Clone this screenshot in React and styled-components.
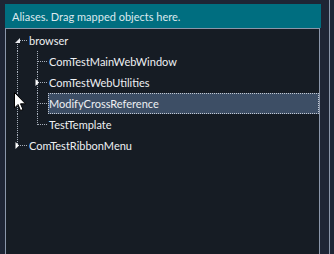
import React from 'react'
import styled, { createGlobalStyle, css } from 'styled-components'

const GlobalStyle = createGlobalStyle`
  html, body {
    margin: 0;
    padding: 0;
    background: #1e2535;
    font-family: Lato, "Noto Sans", sans-serif;
  }
`;

const Screen = styled.div`
    position: relative;
    width: 334px;
    height: 254px;
    display: flex;
    overflow: hidden;
`;

const Main = styled.div`
    width: 316px;
    margin: 4px 0 0 5px;
    display: flex;
    flex-direction: column;
`;

const Edge = styled.div`
    width: 1px;
    margin-left: 8px;
    background: #8a96aa;
`;

const Header = styled.div`
    height: 24px;
    background: #006e80;
    color: #dce9ee;
    font-size: 11px;
    display: flex;
    align-items: center;
    padding-left: 7px;
`;

const Panel = styled.div`
    flex: 1;
    width: 315px;
    box-sizing: border-box;
    background: #161c24;
    border-left: 1px solid #8a96aa;
    border-top: 1px solid #8a96aa;
    border-right: 1px solid #8a96aa;
    padding: 1px 0 0 1px;
`;

const Row = styled.div`
    height: 21px;
    display: flex;
    align-items: stretch;
`;

const Branch = styled.div`
    position: relative;
    width: 20px;
    flex: none;

    ${p => (p.$kind === 'pipe' || p.$kind === 'tee') && css`
        &::before {
            content: '';
            position: absolute;
            left: 10px;
            top: 0;
            bottom: 0;
            border-left: 1px dotted #a7afbb;
        }
    `}
    ${p => p.$kind === 'elbow' && css`
        &::before {
            content: '';
            position: absolute;
            left: 10px;
            top: 0;
            height: 11px;
            border-left: 1px dotted #a7afbb;
        }
    `}
    ${p => p.$kind === 'first' && css`
        &::before {
            content: '';
            position: absolute;
            left: 10px;
            top: 11px;
            bottom: 0;
            border-left: 1px dotted #a7afbb;
        }
    `}
    ${p => p.$kind !== 'pipe' && css`
        &::after {
            content: '';
            position: absolute;
            left: 11px;
            right: 0;
            top: 10px;
            border-top: 1px dotted #a7afbb;
        }
    `}
`;

const Toggle = styled.svg`
    position: absolute;
    left: 7px;
    top: 7px;
    z-index: 1;
`;

const Label = styled.div`
    flex: 1;
    margin-left: 1px;
    display: flex;
    align-items: center;
    font-size: 11px;
    color: #eef0f3;
    white-space: nowrap;
    box-sizing: border-box;
    border: 1px solid transparent;
    ${p => p.$selected && css`
        background: #3d4e65;
        border: 1px dotted #c4cad3;
    `}
`;

const Cursor = styled.svg`
    position: absolute;
    left: 14px;
    top: 92px;
`;

function Arrow({ open }) {
    return open ? (
        <Toggle width="7" height="7" viewBox="0 0 7 7">
            <polygon points="6,1 6,6 1,6" fill="#e8eaee" />
        </Toggle>
    ) : (
        <Toggle width="7" height="7" viewBox="0 0 7 7">
            <polygon points="1.5,0 5,3.5 1.5,7" fill="#ffffff" />
        </Toggle>
    )
}

const rows = [
    { label: 'browser', lines: ['first'], toggle: 'open' },
    { label: 'ComTestMainWebWindow', lines: ['pipe', 'tee'] },
    { label: 'ComTestWebUtilities', lines: ['pipe', 'tee'], toggle: 'closed' },
    { label: 'ModifyCrossReference', lines: ['pipe', 'tee'], selected: true },
    { label: 'TestTemplate', lines: ['pipe', 'elbow'] },
    { label: 'ComTestRibbonMenu', lines: ['elbow'], toggle: 'closed' },
]

function App() {
    return (
        <Screen>
            <GlobalStyle />
            <Main>
                <Header>Aliases. Drag mapped objects here.</Header>
                <Panel>
                    {rows.map(r => (
                        <Row key={r.label}>
                            {r.lines.map((kind, i) => (
                                <Branch key={i} $kind={kind}>
                                    {i === r.lines.length - 1 && r.toggle && <Arrow open={r.toggle === 'open'} />}
                                </Branch>
                            ))}
                            <Label $selected={r.selected}>{r.label}</Label>
                        </Row>
                    ))}
                </Panel>
            </Main>
            <Edge />
            <Cursor width="13" height="20" viewBox="0 0 13 20">
                <path d="M0.5 0.5 L0.5 16 L4 12.5 L6.5 18.5 L9 17.5 L6.5 11.8 L11.5 11.8 Z" fill="#ffffff" stroke="#000000" strokeWidth="1" />
            </Cursor>
        </Screen>
    )
}

export default App
